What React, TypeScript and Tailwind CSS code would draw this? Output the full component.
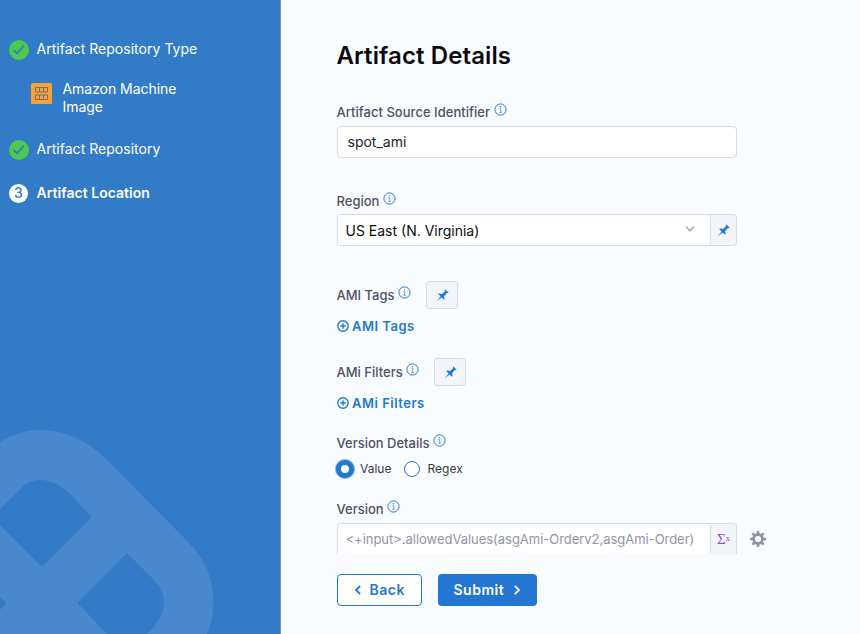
import React from "react";

function InfoIcon() {
  return (
    <svg className="relative -top-[2.5px] ml-[3.5px] size-[13px] shrink-0" viewBox="0 0 13 13" fill="none">
      <circle cx="6.5" cy="6.5" r="5.6" stroke="#2377d3" strokeWidth="1" />
      <path d="M5.500 5.500h1.200v3.800M5.400 9.300h2.500" stroke="#5c9be0" strokeWidth=".9" />
      <circle cx="6.5" cy="3.7" r=".7" fill="#3f89da" />
    </svg>
  );
}

function PinIcon() {
  return (
    <svg className="size-[13px]" viewBox="0 0 13 13" fill="#1b79d6">
      <path d="M9.300.400c-.5.400-.4 1.200-.1 1.900L5.700 5.200C4.500 4.500 3 4.300 2.200 4.900L4.700 7.600L.400 12.600L5.500 8.400L8.100 10.800C8.700 10 8.500 8.600 7.900 7.400L10.800 3.900C11.500 4.200 12.200 4.200 12.700 3.800Z" />
    </svg>
  );
}

function StepCheck() {
  return (
    <svg className="relative top-px size-5 shrink-0" viewBox="0 0 20 20" fill="none">
      <circle cx="10" cy="10" r="10" fill="#4dc952" />
      <path d="M4.700 10.200l3.300 3 7-7.700" stroke="#327bc6" strokeWidth="1.7" />
    </svg>
  );
}

function MachineImageIcon() {
  return (
    <svg className="size-[21px] shrink-0" viewBox="0 0 21 21" fill="none">
      <rect width="21" height="21" rx="1.5" fill="#f9a03a" />
      <path d="M4.500 4.500h12v4.500h-12zM8.500 4.500v4.500M12.500 4.500v4.500M4.500 12h12v4.500h-12zM8.500 12v4.500M12.500 12v4.500" stroke="#77736a" strokeWidth="1" />
    </svg>
  );
}

function Label({ children }: { children: React.ReactNode }) {
  return (
    <div className="-ml-[0.5px] flex h-5 items-center whitespace-nowrap text-[13px] font-medium leading-5 text-[#4f5162]">
      <span>{children}</span>
      <InfoIcon />
    </div>
  );
}

function AddLink({ children }: { children: React.ReactNode }) {
  return (
    <button className="flex h-5 items-center gap-[3px] text-[13px] font-semibold tracking-[0.5px] text-[#2377d3]">
      <svg className="relative -top-px size-3" viewBox="0 0 12 12" fill="none" stroke="#2377d3" strokeWidth="1.4">
        <circle cx="6" cy="6" r="5.2" />
        <path d="M6 3.200v5.600M3.200 6h5.600" />
      </svg>
      <span>{children}</span>
    </button>
  );
}

function PinButton() {
  return (
    <button className="flex h-7 w-8 items-center justify-center rounded-[3px] border border-[#d9dae5] bg-[#f3f3fa]">
      <PinIcon />
    </button>
  );
}

function Gear() {
  return (
    <svg className="ml-[13px] size-4" viewBox="0 0 16 16" fill="none">
      <circle cx="8" cy="8" r="4.5" stroke="#9293ab" strokeWidth="2.8" />
      <path d="M8 0v3M8 13v3M0 8h3M13 8h3M2.350 2.350l2.100 2.100M11.550 11.550l2.100 2.100M2.350 13.650l2.100-2.100M11.550 4.450l2.100-2.100" stroke="#9293ab" strokeWidth="2.6" />
    </svg>
  );
}

function Sidebar() {
  return (
    <aside className="relative w-[281px] shrink-0 border-r border-[#8b9198] bg-[#327bc6] pl-[9px] pt-[39px] text-sm text-white">
      <svg className="absolute bottom-0 left-0 h-[214px] w-[280px]" viewBox="0 420 280 214">
        <path
          fill="#4789cc"
          fillRule="evenodd"
          d="M0 442C12 434 26 430 40 430C64 430 87 440 106 459L189 543C205 559 213.500 579 213.500 602C213.500 614 211 625 207 634H0ZM0 509L19 490.500C25 484 32 480 40 480C50 480 61 485 71 495L91.500 517.500L42 567L0 525ZM127 553L153 579C161 587 164 594 164 602C164 614 158 623 147 634H107L77.500 603ZM0 597L6.500 603L0 610Z"
        />
      </svg>
      <div className="flex h-5 items-center gap-[7.5px]">
        <StepCheck />
        <span className="tracking-[0.03px]">Artifact Repository Type</span>
      </div>
      <div className="ml-[22px] mt-[21px] flex h-9 gap-[10.5px]">
        <div className="pt-[3px]"><MachineImageIcon /></div>
        <span className="w-[120px] leading-[18px] tracking-[-0.05px]">Amazon Machine Image</span>
      </div>
      <div className="mt-[23px] flex h-5 items-center gap-[7.5px]">
        <StepCheck />
        <span className="tracking-[0.03px]">Artifact Repository</span>
      </div>
      <div className="mt-6 flex h-5 items-center gap-[8.5px]">
        <span className="flex size-[19px] items-center justify-center rounded-full bg-white text-sm font-medium text-[#327bc6]">3</span>
        <span className="font-semibold tracking-[0.03px]">Artifact Location</span>
      </div>
    </aside>
  );
}

export default function App() {
  return (
    <div className="flex h-[634px] w-[860px] overflow-hidden bg-[#f8fcff] font-['Inter',sans-serif]">
      <Sidebar />
      <main className="flex flex-1 flex-col items-start pl-14 pt-10">
        <h1 className="-ml-[0.5px] h-[62px] whitespace-nowrap text-2xl font-semibold leading-[31px] tracking-[0.1px] text-[#0b0b0d]">Artifact Details</h1>
        <Label><span className="tracking-[0.03px]">Artifact Source Identifier</span></Label>
        <div className="mt-1 flex h-8 w-[400px] items-center rounded border border-[#d9dae5] bg-white pl-[9.5px] text-sm text-[#22222a]">spot_ami</div>

        <div className="mt-[33px]"><Label>Region</Label></div>
        <div className="mt-[3px] flex h-8 w-[400px] overflow-hidden rounded border border-[#d9dae5] bg-[#f3f3fa]">
          <div className="flex w-[373px] items-center justify-between rounded-r border-r border-[#d9dae5] bg-white pl-[7.5px] pr-[15px] text-sm text-[#0b0b0d]">
            <span className="pt-px">US East (N. Virginia)</span>
            <svg className="relative -top-px h-1.5 w-2.5" viewBox="0 0 10 6" fill="none" stroke="#b0b1c4" strokeWidth="1.7"><path d="M1 .7l4 4 4-4" /></svg>
          </div>
          <div className="flex flex-1 items-center justify-center"><PinIcon /></div>
        </div>

        <div className="mt-[35px] flex h-7 items-center gap-[15px]"><Label>AMI Tags</Label><PinButton /></div>
        <div className="mt-2"><AddLink>AMI Tags</AddLink></div>
        <div className="mt-[21px] flex h-7 items-center gap-[15px]"><Label>AMi Filters</Label><PinButton /></div>
        <div className="mt-2"><AddLink>AMi Filters</AddLink></div>

        <div className="mt-[19px]"><Label>Version Details</Label></div>
        <div className="mt-1.5 flex h-5 items-center text-xs text-[#383946]">
          <span className="-ml-px flex size-[18px] items-center justify-center rounded-full bg-[#2377d3] ring-1 ring-[#7cafdf]"><span className="size-2 rounded-full bg-white" /></span>
          <span className="ml-1.5 w-[44px]">Value</span>
          <span className="size-4 rounded-full border border-[#2377d3] bg-white" />
          <span className="ml-[7.5px]">Regex</span>
        </div>

        <div className="mt-5"><Label>Version</Label></div>
        <div className="mt-1 flex h-[31px] items-center">
          <div className="flex h-[31px] w-[400px] overflow-hidden rounded-t border border-b-0 border-[#d9dae5] bg-[#f3f3fa]">
            <div className="flex w-[373px] shrink-0 items-center rounded-r border-r border-[#d9dae5] bg-white pl-[7.5px] pt-px text-[13px] text-[#9293ab]">
              <span className="whitespace-nowrap tracking-[-0.03px]">&lt;+input&gt;.allowedValues(asgAmi-Orderv2,asgAmi-Order)</span>
            </div>
            <div className="flex flex-1 items-center justify-center font-['Liberation_Serif',serif] text-[15px] text-[#8f4bdb]">Σ<span className="text-[9px]">x</span></div>
          </div>
          <Gear />
        </div>

        <div className="mt-5 flex gap-4 text-sm font-semibold tracking-[0.5px]">
          <button className="flex h-8 w-[85px] items-center gap-[8.5px] rounded border border-[#2377d3] bg-white pl-[17px] text-[#2377d3]">
            <svg className="h-2.5 w-1.5" viewBox="0 0 6 10" fill="none" stroke="currentColor" strokeWidth="1.8"><path d="M5.200 .8L1 5l4.200 4.200" /></svg>
            Back
          </button>
          <button className="flex h-8 w-[99px] items-center gap-[9.5px] rounded bg-[#2377d3] pl-[15.5px] text-white">
            Submit
            <svg className="h-2.5 w-1.5" viewBox="0 0 6 10" fill="none" stroke="currentColor" strokeWidth="1.8"><path d="M.8 .8L5 5 .8 9.200" /></svg>
          </button>
        </div>
      </main>
    </div>
  );
}
